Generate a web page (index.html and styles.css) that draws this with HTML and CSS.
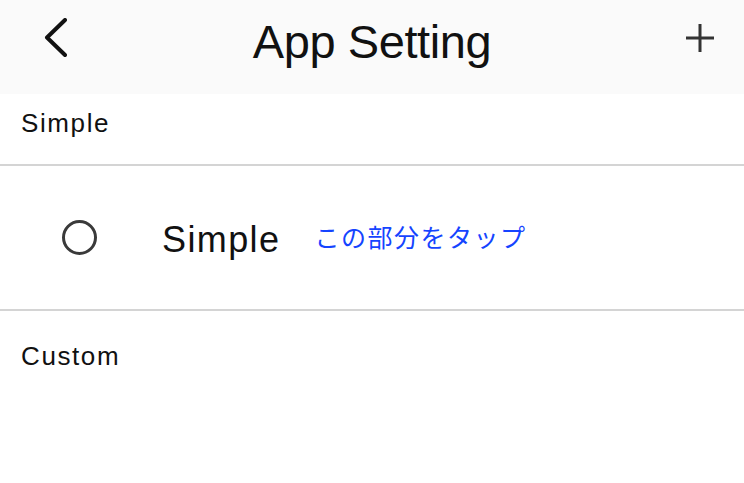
FILE: index.html
```html
<!DOCTYPE html>
<html lang="ja">
<head>
  <meta charset="UTF-8" />
  <meta name="viewport" content="width=device-width, initial-scale=1" />
  <title>App Setting</title>
  <link rel="stylesheet" href="styles.css">
</head>
<body>

  <!-- Top bar -->
  <header class="topbar">
    <button class="icon-btn back" aria-label="Back">
      <svg width="24" height="40" viewBox="0 0 24 40">
        <polyline points="22,2 4,19.5 22,37" fill="none" stroke="#111" stroke-width="4" stroke-linecap="round" stroke-linejoin="round"/>
      </svg>
    </button>
    <h1 class="title">App Setting</h1>
    <button class="icon-btn add" aria-label="Add">
      <svg width="32" height="32" viewBox="0 0 32 32">
        <path d="M16 2 V30 M2 16 H30" fill="none" stroke="#333" stroke-width="3"/>
      </svg>
    </button>
  </header>

  <!-- Simple section -->
  <div class="section-label first">Simple</div>

  <div class="option-row">
    <span class="radio"></span>
    <span class="option-name">Simple</span>
    <a class="tap-link" href="#">この部分をタップ</a>
  </div>

  <!-- Custom section -->
  <div class="section-label">Custom</div>

</body>
</html>
```

FILE: styles.css
```css
* {
  margin: 0;
  padding: 0;
  box-sizing: border-box;
}

body {
  font-family: 'Liberation Sans', Arial, sans-serif;
  background: #fff;
  color: #111;
}

.topbar {
  height: 94px;
  background: #fafafa;
  display: grid;
  grid-template-columns: 1fr auto 1fr;
  align-items: center;
  padding: 0 28px 18px 28px;
}

.icon-btn {
  background: none;
  border: none;
  display: flex;
  align-items: center;
  cursor: pointer;
}

.icon-btn.back {
  margin-left: 15px;
}

.icon-btn.add {
  justify-self: end;
}

.title {
  font-size: 47px;
  font-weight: 400;
  line-height: 1;
  letter-spacing: -0.4px;
  padding-top: 6px;
  color: #111;
}

.section-label {
  font-size: 26px;
  line-height: 30px;
  letter-spacing: 1.6px;
  padding: 30px 21px 0;
  color: #111;
}

.section-label.first {
  padding-top: 14px;
  height: 72px;
  border-bottom: 2px solid #d4d4d4;
}

.option-row {
  height: 145px;
  display: flex;
  align-items: center;
  padding: 4px 0 0 62px;
  border-bottom: 2px solid #d4d4d4;
}

.radio {
  width: 35px;
  height: 35px;
  border: 3px solid #3a3a3a;
  border-radius: 50%;
  margin-top: -4px;
}

.option-name {
  font-size: 36px;
  letter-spacing: 1.4px;
  margin-left: 65px;
}

.tap-link {
  font-family: 'Noto Sans CJK JP', sans-serif;
  font-size: 25px;
  letter-spacing: 1.5px;
  color: #1544ff;
  text-decoration: none;
  margin-left: 34px;
  margin-top: -8px;
}
```
